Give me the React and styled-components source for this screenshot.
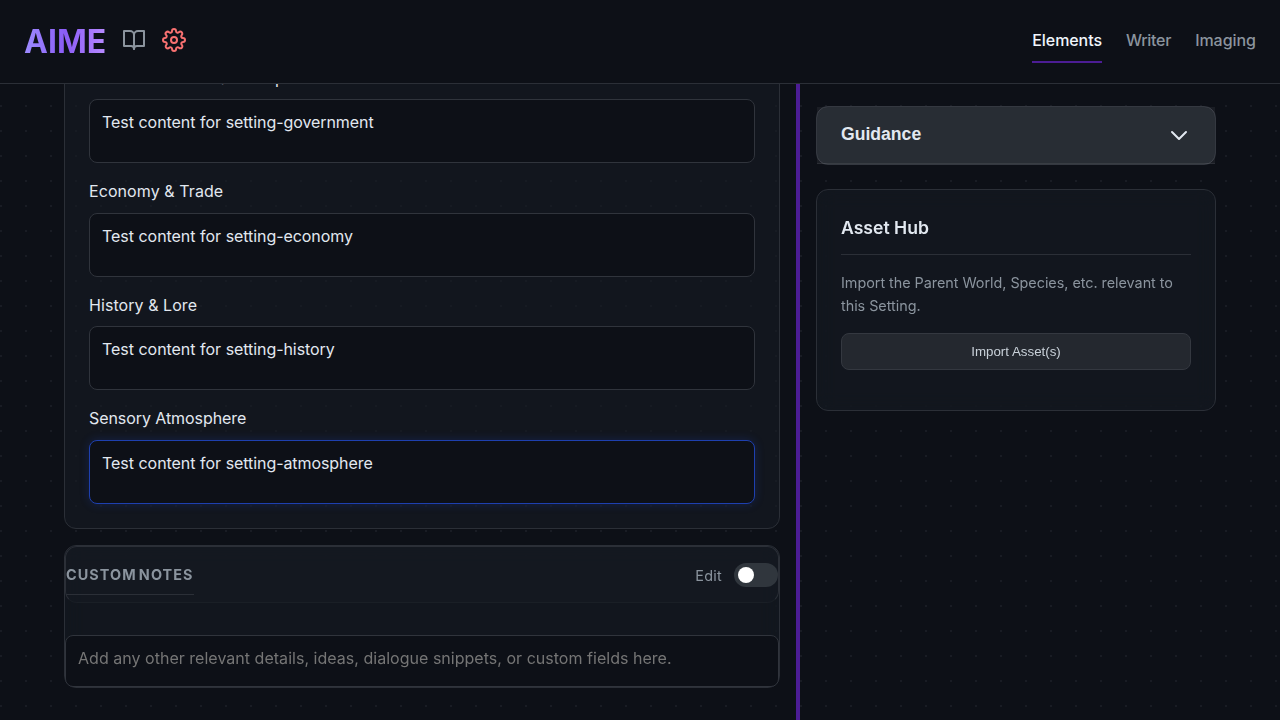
import React from 'react';
import styled, { createGlobalStyle, css } from 'styled-components';

const line = '#2b2f37';

const GlobalStyle = createGlobalStyle`
  *, *::before, *::after { box-sizing: border-box; }
  body {
    margin: 0;
    background-color: #0d1017;
    background-image: radial-gradient(circle at 1px 1px, #191c24 1px, transparent 0);
    background-size: 25px 25px;
    background-position: 0 5px;
    color: #e2e8f0;
    font-family: Inter, sans-serif;
    font-size: 16px;
    line-height: 1.6;
    overflow: hidden;
  }
`;

const Page = styled.div`
  display: flex;
  flex-direction: column;
  height: 100vh;
`;

const Header = styled.header`
  display: flex;
  align-items: center;
  justify-content: space-between;
  flex: none;
  height: 84px;
  padding: 0 24px;
  background: #0d1017;
  border-bottom: 1px solid ${line};
`;

const Brand = styled.div`
  display: flex;
  align-items: center;
  gap: 16px;
`;

const Logo = styled.h1`
  margin: 0;
  font-size: 32px;
  font-weight: 700;
  line-height: 51px;
  background: linear-gradient(90deg, #9d8cff, #8b5cf6 50%, #b78aff);
  background-clip: text;
  -webkit-background-clip: text;
  color: transparent;
`;

const IconLink = styled.a`
  display: flex;
  padding-bottom: 4px;
  color: ${(p) => (p.$alert ? '#f87171' : '#8b949e')};
`;

const Nav = styled.nav`
  display: flex;
  gap: 24px;
`;

const NavLink = styled.a`
  padding: 8px 0;
  font-weight: 500;
  line-height: 25.6px;
  letter-spacing: ${(p) => p.$tracking || 0}px;
  color: ${(p) => (p.$active ? '#f0f6fc' : '#8b949e')};
  border-bottom: 2px solid ${(p) => (p.$active ? '#4c1d95' : 'transparent')};
`;

const Main = styled.main`
  display: flex;
  flex: 1;
  min-height: 0;
  padding: 0 64px;
`;

const Editor = styled.section`
  display: flex;
  flex-direction: column;
  justify-content: flex-end;
  gap: 16px;
  width: 716px;
  margin-right: 16px;
  padding-bottom: 32px;
  overflow: hidden;
`;

const Sidebar = styled.aside`
  display: flex;
  flex-direction: column;
  gap: 24px;
  width: 420px;
  padding: 22px 0 0 16px;
  border-left: 4px solid #4c1d95;
`;

const panel = css`
  border: 1px solid ${line};
  border-radius: 12px;
  background: rgba(22, 27, 35, 0.6);
`;

const FieldsCard = styled.div`
  ${panel}
  display: flex;
  flex-direction: column;
  flex: none;
  gap: 16px;
  padding: 24px;
`;

const Field = styled.label`
  display: flex;
  flex-direction: column;
  gap: 8px;
  letter-spacing: ${(p) => p.$tracking}px;
`;

const TextBox = styled.textarea`
  display: block;
  width: 100%;
  height: ${(p) => p.$height || 64}px;
  padding: 12px;
  border: 1px solid ${(p) => (p.$focused ? '#1e40af' : '#30343c')};
  border-radius: 8px;
  background: #0d1017;
  box-shadow: ${(p) => (p.$focused ? '0 0 10px rgba(30, 64, 175, 0.3)' : 'none')};
  color: #e2e8f0;
  font: 16px Inter, sans-serif;
  letter-spacing: -0.07px;
  word-spacing: 0.3px;
  resize: none;
  outline: none;
  overflow: hidden;
  &::placeholder { color: #757575; letter-spacing: 0.025px; word-spacing: 0; }
`;

const NotesCard = styled.div`
  ${panel}
  display: flex;
  flex-direction: column;
  justify-content: space-between;
  flex: none;
  height: 143px;
  backdrop-filter: blur(10px);
`;

const NotesHeader = styled.div`
  ${panel}
  display: flex;
  align-items: center;
  justify-content: space-between;
  height: 57px;
  border-bottom-color: #1a1f26;
`;

const NotesTitle = styled.h3`
  margin: 8px 0 0;
  padding-bottom: 8px;
  border-bottom: 1px solid ${line};
  color: #8b949e;
  font-size: 14.4px;
  font-weight: 700;
  letter-spacing: 1.06px;
  word-spacing: -2.2px;
  line-height: 23px;
  text-transform: uppercase;
`;

const EditControl = styled.div`
  display: flex;
  align-items: center;
  gap: 12px;
  padding-top: 1px;
  color: #8b949e;
  font-size: 14.4px;
`;

const EditLabel = styled.span`
  padding-top: 1px;
  letter-spacing: 0.25px;
`;

const Toggle = styled.span`
  display: flex;
  align-items: center;
  width: 44px;
  height: 24px;
  padding: 4px;
  border-radius: 12px;
  background: #30363d;
  &::before {
    content: '';
    width: 16px;
    height: 16px;
    border-radius: 50%;
    background: #fff;
  }
`;

const GuidanceCard = styled.div`
  ${panel}
  border-color: #343840;
  background: #1c2128;
`;

const GuidanceButton = styled.button`
  display: flex;
  align-items: center;
  justify-content: space-between;
  width: 100%;
  height: 57px;
  padding: 0 22px 0 24px;
  border: 0;
  border-bottom: 1px solid rgba(255, 255, 255, 0.08);
  background: rgba(240, 246, 252, 0.06);
  color: #e2e8f0;
  font: 700 17.6px 'Liberation Sans', sans-serif;
`;

const GuidanceLabel = styled.span`
  padding-bottom: 2px;
`;

const HubCard = styled.div`
  ${panel}
  height: 222px;
  padding: 24px;
  backdrop-filter: blur(10px);
`;

const HubTitle = styled.h3`
  margin: 0 0 16px;
  padding-bottom: 12px;
  border-bottom: 1px solid ${line};
  font-size: 17.6px;
  font-weight: 600;
  line-height: 28px;
`;

const HubText = styled.p`
  margin: 0 0 16px;
  color: #8b949e;
  font-size: 14.4px;
  line-height: 23px;
  letter-spacing: -0.035px;
`;

const ImportButton = styled.button`
  width: 100%;
  height: 37px;
  border: 1px solid #343840;
  border-radius: 8px;
  background: #24282f;
  color: #c9d1d9;
  font: 13.333px 'Liberation Sans', sans-serif;
`;

const GearIcon = () => (
  <svg width="24" height="24" viewBox="0 0 24 24" fill="none" stroke="currentColor" strokeWidth="2" strokeLinecap="round" strokeLinejoin="round">
    <circle cx="12" cy="12" r="3" />
    <path d="M19.4 15a1.65 1.65 0 0 0 .33 1.82l.06.06a2 2 0 1 1-2.83 2.83l-.06-.06a1.65 1.65 0 0 0-1.82-.33 1.65 1.65 0 0 0-1 1.51V21a2 2 0 0 1-4 0v-.09A1.65 1.65 0 0 0 9 19.4a1.65 1.65 0 0 0-1.82.33l-.06.06a2 2 0 1 1-2.83-2.83l.06-.06a1.65 1.65 0 0 0 .33-1.82 1.65 1.65 0 0 0-1.51-1H3a2 2 0 0 1 0-4h.09A1.65 1.65 0 0 0 4.6 9a1.65 1.65 0 0 0-.33-1.82l-.06-.06a2 2 0 1 1 2.83-2.83l.06.06a1.65 1.65 0 0 0 1.82.33H9a1.65 1.65 0 0 0 1-1.51V3a2 2 0 0 1 4 0v.09a1.65 1.65 0 0 0 1 1.51 1.65 1.65 0 0 0 1.82-.33l.06-.06a2 2 0 1 1 2.83 2.83l-.06.06a1.65 1.65 0 0 0-.33 1.82V9a1.65 1.65 0 0 0 1.51 1H21a2 2 0 0 1 0 4h-.09a1.65 1.65 0 0 0-1.51 1z" />
  </svg>
);

const BookIcon = () => (
  <svg width="24" height="24" viewBox="0 0 24 24" fill="none" stroke="currentColor" strokeWidth="2" strokeLinecap="round" strokeLinejoin="round">
    <path d="M2 3h6a4 4 0 0 1 4 4v14a3 3 0 0 0-3-3H2z" />
    <path d="M22 3h-6a4 4 0 0 0-4 4v14a3 3 0 0 1 3-3h7z" />
  </svg>
);

const ChevronIcon = () => (
  <svg width="28" height="28" viewBox="0 0 28 28" fill="none" stroke="currentColor" strokeWidth="2" strokeLinecap="round" strokeLinejoin="round">
    <path d="M7 11l7 7 7-7" />
  </svg>
);

const fields = [
  { label: 'Government & Leadership', id: 'setting-government', tracking: -0.03 },
  { label: 'Economy & Trade', id: 'setting-economy', tracking: 0.08 },
  { label: 'History & Lore', id: 'setting-history', tracking: 0.06 },
  { label: 'Sensory Atmosphere', id: 'setting-atmosphere', tracking: -0.07, focused: true },
];

export default function App() {
  return (
    <Page>
      <GlobalStyle />
      <Header>
        <Brand>
          <Logo>AIME</Logo>
          <IconLink><BookIcon /></IconLink>
          <IconLink $alert><GearIcon /></IconLink>
        </Brand>
        <Nav>
          <NavLink $active $tracking={-0.06}>Elements</NavLink>
          <NavLink $tracking={-0.28}>Writer</NavLink>
          <NavLink $tracking={-0.04}>Imaging</NavLink>
        </Nav>
      </Header>
      <Main>
        <Editor>
          <FieldsCard>
            {fields.map((f) => (
              <Field key={f.id} $tracking={f.tracking}>
                {f.label}
                <TextBox $focused={f.focused} defaultValue={`Test content for ${f.id}`} />
              </Field>
            ))}
          </FieldsCard>
          <NotesCard>
            <NotesHeader>
              <NotesTitle>Custom Notes</NotesTitle>
              <EditControl>
                <EditLabel>Edit</EditLabel>
                <Toggle />
              </EditControl>
            </NotesHeader>
            <TextBox $height={52} placeholder="Add any other relevant details, ideas, dialogue snippets, or custom fields here." />
          </NotesCard>
        </Editor>
        <Sidebar>
          <GuidanceCard>
            <GuidanceButton>
              <GuidanceLabel>Guidance</GuidanceLabel>
              <ChevronIcon />
            </GuidanceButton>
          </GuidanceCard>
          <HubCard>
            <HubTitle>Asset Hub</HubTitle>
            <HubText>Import the Parent World, Species, etc. relevant to this Setting.</HubText>
            <ImportButton>Import Asset(s)</ImportButton>
          </HubCard>
        </Sidebar>
      </Main>
    </Page>
  );
}
